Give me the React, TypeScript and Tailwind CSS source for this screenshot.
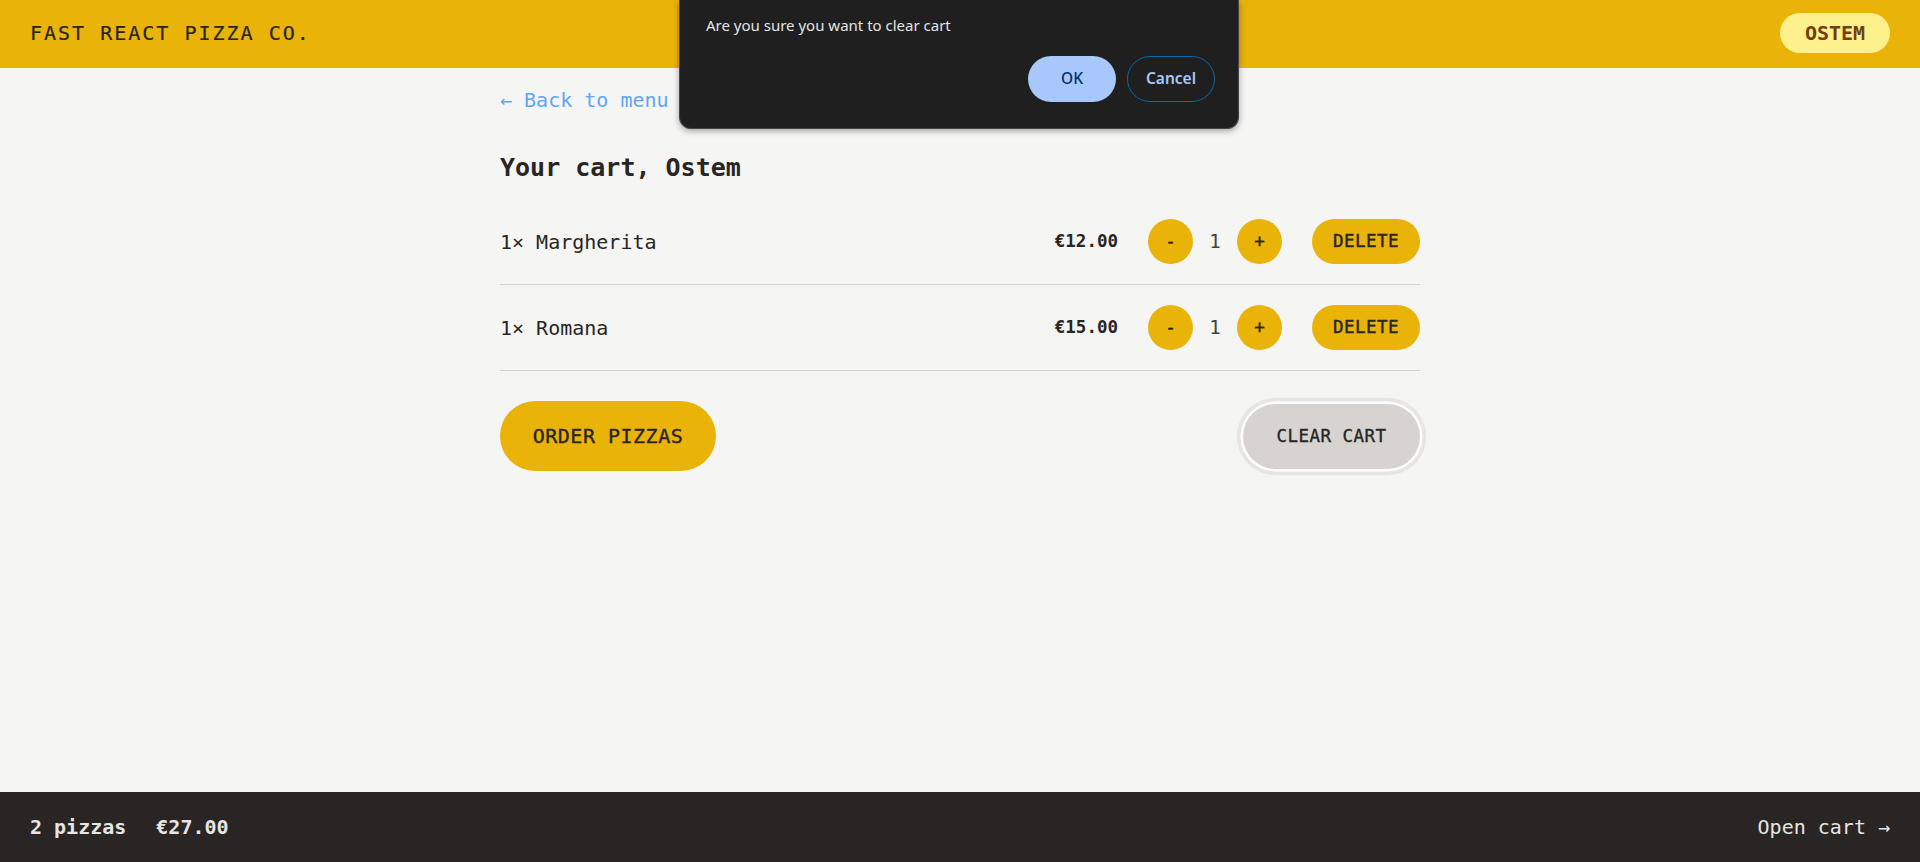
import React from "react";

function CartItem({ name, price }: { name: string; price: string }) {
  return (
    <li className="flex items-center justify-between py-[20px]">
      <p className="text-[20px] leading-[30px]">{name}</p>
      <div className="flex items-center gap-[30px]">
        <p className="text-[17.5px] font-bold">{price}</p>
        <div className="flex items-center gap-[16px]">
          <button className="flex h-[45px] w-[45px] items-center justify-center rounded-full bg-[#eab308] text-[17.5px] text-[#292524] [-webkit-text-stroke:0.4px_#292524]">
            -
          </button>
          <span className="w-[12px] text-center text-[19px] text-[#44403c]">1</span>
          <button className="flex h-[45px] w-[45px] items-center justify-center rounded-full bg-[#eab308] text-[17.5px] text-[#292524] [-webkit-text-stroke:0.4px_#292524]">
            +
          </button>
        </div>
        <button className="flex h-[45px] w-[108px] items-center justify-center rounded-full bg-[#eab308] text-[17.5px] tracking-[0.44px] text-[#292524] [-webkit-text-stroke:0.45px_#292524]">
          DELETE
        </button>
      </div>
    </li>
  );
}

export default function App() {
  return (
    <div className="relative grid h-screen grid-rows-[68px_1fr_70px] bg-[#f5f5f4] font-['DejaVu_Sans_Mono',monospace] text-[#292524]">
      <header className="flex items-center justify-between bg-[#eab308] px-[30px] pb-[3px]">
        <span className="text-[20px] uppercase tracking-[2px] [-webkit-text-stroke:0.2px_#292524]">Fast React Pizza Co.</span>
        <span className="flex h-[40px] w-[110px] items-center justify-center rounded-full bg-[#fef08a] text-[20px] font-semibold text-[#713f12]">
          OSTEM
        </span>
      </header>

      <main className="overflow-hidden">
        <div className="mx-auto max-w-[960px] px-[20px] pt-[17px]">
          <a className="block text-[20px] leading-[30px] text-[#60a5fa]">← Back to menu</a>
          <h2 className="mt-[35px] text-[25px] font-semibold leading-[35px]">Your cart, Ostem</h2>
          <ul className="mt-[14px] divide-y divide-[#d6d3d1] border-b border-[#d6d3d1]">
            <CartItem name="1× Margherita" price="€12.00" />
            <CartItem name="1× Romana" price="€15.00" />
          </ul>
          <div className="mt-[30px] flex items-center justify-between">
            <button className="flex h-[70px] w-[216px] items-center justify-center rounded-full bg-[#eab308] text-[20px] tracking-[0.5px] text-[#292524] [-webkit-text-stroke:0.35px_#292524]">
              ORDER PIZZAS
            </button>
            <button className="flex h-[65px] w-[177px] items-center justify-center rounded-full bg-[#d6d3d1] text-[17.5px] tracking-[0.44px] text-[#292524] ring-[3.75px] ring-[#e7e5e4] ring-offset-[2.5px] ring-offset-white [-webkit-text-stroke:0.35px_#292524]">
              CLEAR CART
            </button>
          </div>
        </div>
      </main>

      <footer className="flex items-center justify-between bg-[#292524] px-[30px] text-[20px] text-[#e7e5e4]">
        <p className="flex gap-[30px] font-semibold">
          <span>2 pizzas</span>
          <span>€27.00</span>
        </p>
        <a>Open cart →</a>
      </footer>

      <div className="absolute left-[679px] top-0 flex h-[129px] w-[560px] flex-col rounded-b-[12px] border-x border-b border-[#474747] bg-[#1f1f1f] pl-[26px] pr-[23px] pt-[15px] font-['Noto_Sans',sans-serif] shadow-[0_2px_6px_rgba(0,0,0,0.35)]">
        <p className="text-[15px] leading-[20px] text-[#e3e3e3]">Are you sure you want to clear cart</p>
        <div className="mt-[21px] flex justify-end gap-[11px]">
          <button className="flex h-[46px] w-[88px] items-center justify-center rounded-full bg-[#a8c7fa] text-[15.5px] font-medium text-[#062e6f]">
            OK
          </button>
          <button className="flex h-[46px] w-[88px] items-center justify-center rounded-full border border-[#0b6aa8] text-[15.5px] font-semibold text-[#a8c7fa]">
            Cancel
          </button>
        </div>
      </div>
    </div>
  );
}
